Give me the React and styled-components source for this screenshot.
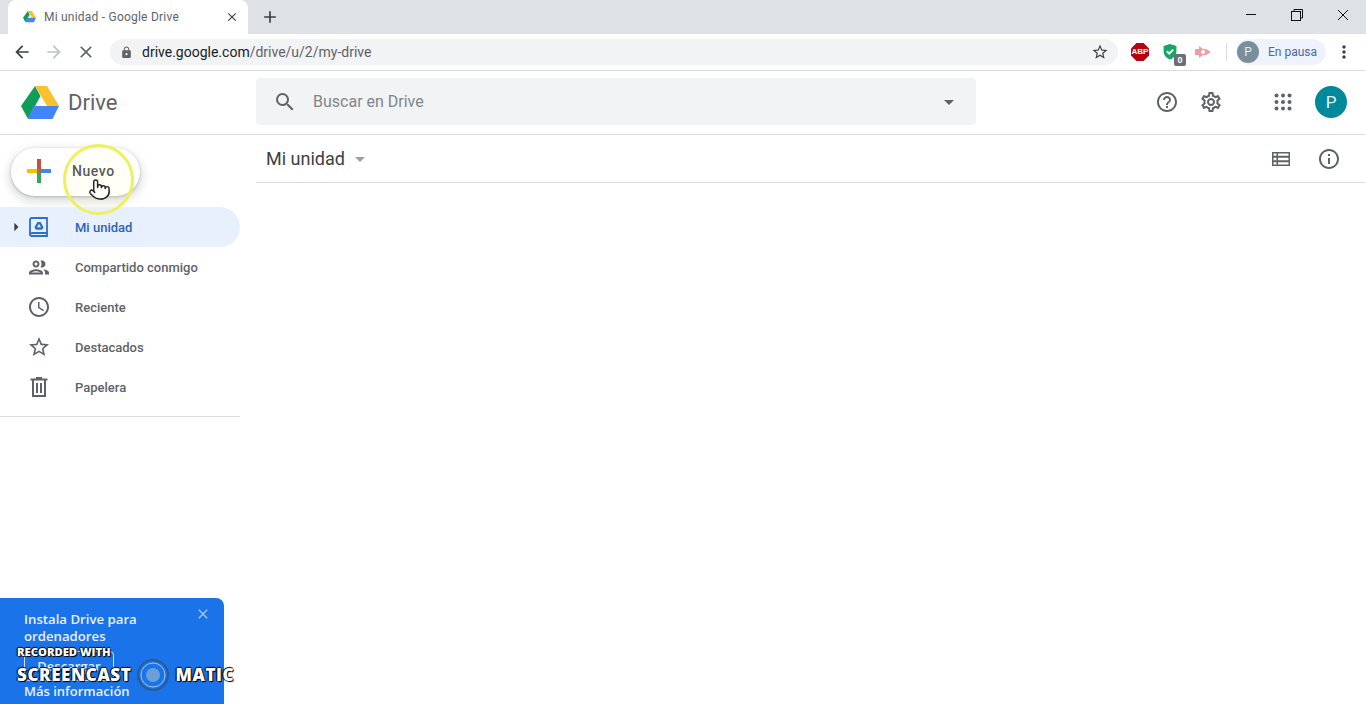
import styled, { createGlobalStyle } from 'styled-components'
import { Pointer } from 'lucide-react'
import {
  MdAccessTime,
  MdAdd,
  MdArrowBack,
  MdArrowDropDown,
  MdArrowForward,
  MdArrowRight,
  MdClose,
  MdHelpOutline,
  MdInfoOutline,
  MdLock,
  MdMoreVert,
  MdOutlinePeople,
  MdOutlineSettings,
  MdSearch,
  MdStarBorder,
} from 'react-icons/md'

const GlobalStyle = createGlobalStyle`
  html, body {
    margin: 0;
    height: 100%;
    overflow: hidden;
    background: #fff;
    font-family: Roboto, "Liberation Sans", sans-serif;
  }
`

const Page = styled.div`
  position: relative;
  width: 1366px;
  height: 704px;
  overflow: hidden;
  display: flex;
  flex-direction: column;
`

const TabStrip = styled.div`
  height: 34px;
  flex: none;
  display: flex;
  align-items: flex-end;
  padding-left: 8px;
  background: #dee1e6;
`

const Tab = styled.div`
  width: 240px;
  height: 34px;
  padding: 0 9px 0 15px;
  box-sizing: border-box;
  display: flex;
  align-items: center;
  gap: 8px;
  background: #fff;
  border-radius: 8px 8px 0 0;
  font-size: 12px;
  color: #5f6368;
`

const TabTitle = styled.span`
  flex: 1;
  letter-spacing: 0.22px;
`

const NewTab = styled.div`
  width: 44px;
  display: flex;
  justify-content: center;
  padding-bottom: 7px;
  color: #3c4043;
  font-size: 20px;
  line-height: 0;
`

const WindowControls = styled.div`
  margin-left: auto;
  align-self: flex-start;
  display: flex;
  height: 30px;
  align-items: center;
`

const WindowButton = styled.div`
  width: 46px;
  height: 30px;
  display: flex;
  align-items: center;
  justify-content: center;
`

const BrowserBar = styled.div`
  height: 36px;
  flex: none;
  display: flex;
  align-items: center;
  background: #fff;
  border-bottom: 1px solid #dadce0;
  box-sizing: content-box;
`

const NavIcon = styled.div`
  width: 32px;
  flex: none;
  display: flex;
  justify-content: center;
  font-size: 20px;
  line-height: 0;
  color: ${(p) => p.$color || '#5f6368'};
`

const MenuIcon = styled(NavIcon)`
  margin-left: 2px;
`

const BackGroup = styled.div`
  display: flex;
  flex: none;
  padding-left: 6px;
`

const UrlPill = styled.div`
  width: 1008px;
  flex: none;
  height: 26px;
  margin-left: 8px;
  padding: 0 9px 0 10px;
  box-sizing: border-box;
  display: flex;
  align-items: center;
  background: #f1f3f4;
  border-radius: 13px;
  color: #5f6368;
`

const Url = styled.span`
  flex: 1;
  margin-left: 9px;
  font-size: 14px;
  color: #5f6368;

  b {
    font-weight: 400;
    color: #202124;
  }
`

const Extensions = styled.div`
  display: flex;
  flex: none;
  align-items: center;
  width: 82px;
  margin-left: 13px;
`

const AbpBadge = styled.div`
  width: 18px;
  height: 18px;
  clip-path: polygon(30% 0, 70% 0, 100% 30%, 100% 70%, 70% 100%, 30% 100%, 0 70%, 0 30%);
  background: #b3040f;
  color: #fff;
  font: 700 8px/18px "Liberation Sans", sans-serif;
  text-align: center;
`

const Shield = styled.div`
  position: relative;
  margin-left: 12px;
  width: 18px;
  height: 16px;
  line-height: 0;
  text-align: center;
`

const ShieldCount = styled.span`
  position: absolute;
  left: 13px;
  top: 10px;
  width: 12px;
  height: 12px;
  border-radius: 2px;
  background: #6b6f75;
  color: #fff;
  font: 700 9px/12px "Liberation Sans", sans-serif;
  text-align: center;
`

const Arrow = styled.div`
  margin-left: 16px;
  line-height: 0;
`

const Separator = styled.div`
  width: 1px;
  flex: none;
  height: 18px;
  margin-left: 13px;
  background: #dadce0;
`

const ProfilePill = styled.div`
  width: 90px;
  flex: none;
  height: 26px;
  margin-left: 9px;
  padding-left: 1px;
  box-sizing: border-box;
  display: flex;
  align-items: center;
  gap: 9px;
  border-radius: 13px;
  background: #eef3fd;
  font-size: 12px;
  color: #4a68a8;
`

const ProfileAvatar = styled.div`
  width: 22px;
  height: 22px;
  border-radius: 50%;
  background: #78909c;
  color: #e8eef2;
  font-size: 12px;
  line-height: 22px;
  text-align: center;
`

const DriveHeader = styled.header`
  height: 64px;
  flex: none;
  padding-bottom: 2px;
  box-sizing: border-box;
  display: flex;
  align-items: center;
  border-bottom: 1px solid #dadce0;
`

const Brand = styled.div`
  width: 256px;
  padding: 2px 0 0 21px;
  box-sizing: border-box;
  display: flex;
  align-items: center;
  gap: 9px;
  font-size: 22px;
  color: #5f6368;
`

const SearchBox = styled.div`
  width: 720px;
  height: 47px;
  padding: 0 15px 0 17px;
  box-sizing: border-box;
  display: flex;
  align-items: center;
  background: #f1f3f4;
  border-radius: 4px;
  font-size: 16px;
  color: #80868b;
  line-height: 0;
`

const SearchText = styled.span`
  flex: 1;
  margin-left: 16px;
  line-height: 20px;
`

const HeaderTools = styled.div`
  flex: 1;
  display: flex;
  align-items: center;
  padding-left: 179px;
`

const ToolIcon = styled.div`
  line-height: 0;
  color: #5f6368;
  font-size: ${(p) => p.$size || 24}px;
  margin-left: ${(p) => p.$gap || 0}px;
`

const DriveAvatar = styled.div`
  width: 32px;
  height: 32px;
  margin-left: 20px;
  border-radius: 50%;
  background: #00899a;
  color: #e0f4f5;
  font-size: 17px;
  line-height: 32px;
  text-align: center;
`

const Body = styled.div`
  flex: 1;
  display: flex;
  min-height: 0;
`

const Sidebar = styled.aside`
  width: 256px;
  flex: none;
  padding-top: 13px;
  box-sizing: border-box;
`

const NewButton = styled.div`
  width: 129px;
  height: 48px;
  margin-left: 11px;
  padding: 0 0 2px 16px;
  box-sizing: border-box;
  display: flex;
  align-items: center;
  gap: 21px;
  background: #fff;
  border-radius: 24px;
  box-shadow: 0 1px 3px rgba(60, 64, 67, 0.3), 0 4px 8px 3px rgba(60, 64, 67, 0.15);
  font-size: 14px;
  font-weight: 500;
  letter-spacing: 0.55px;
  color: #4a4e52;
`

const NavList = styled.nav`
  width: 240px;
  margin-top: 11px;
  padding-bottom: 9px;
  border-bottom: 1px solid #dadce0;
`

const NavRow = styled.div`
  position: relative;
  height: 40px;
  display: flex;
  align-items: center;
  padding-left: 27px;
  box-sizing: border-box;
  gap: 24px;
  border-radius: 0 20px 20px 0;
  background: ${(p) => (p.$active ? '#e8f0fe' : 'transparent')};
  color: ${(p) => (p.$active ? '#2a63bb' : '#5f6368')};
  font-size: 13px;
  font-weight: 500;
`

const RowCaret = styled.span`
  position: absolute;
  left: 6px;
  top: 10px;
  font-size: 20px;
  line-height: 0;
  color: #3c4043;
`

const RowIcon = styled.span`
  width: 24px;
  display: flex;
  justify-content: center;
  font-size: ${(p) => p.$size || 24}px;
  line-height: 0;
  color: #5f6368;
`

const Main = styled.main`
  flex: 1;
`

const MainBar = styled.div`
  height: 48px;
  display: flex;
  align-items: center;
  padding: 0 25px 0 10px;
  border-bottom: 1px solid #dadce0;
  box-sizing: border-box;
`

const MainTitle = styled.div`
  flex: 1;
  display: flex;
  align-items: center;
  gap: 3px;
  font-size: 18px;
  color: #3c4043;
`

const Promo = styled.div`
  position: absolute;
  left: 0;
  bottom: 0;
  width: 224px;
  height: 106px;
  padding: 13px 24px 0;
  box-sizing: border-box;
  background: #1a73e8;
  border-radius: 0 8px 0 0;
  color: #e8f0fe;
  font-family: "Open Sans", Roboto, sans-serif;
  font-size: 13.2px;
  font-weight: 600;
  line-height: 17px;
`

const PromoClose = styled.span`
  position: absolute;
  top: 8px;
  right: 13px;
  font-size: 16px;
  line-height: 0;
  color: #a8c7fa;
`

const PromoButton = styled.div`
  width: 90px;
  height: 30px;
  margin-top: 6px;
  box-sizing: border-box;
  border: 1px solid #cfe0fb;
  border-radius: 4px;
  text-align: center;
  line-height: 28px;
  font-size: 13px;
`

const PromoLink = styled.div`
  margin-top: 2px;
  font-size: 13px;
`

const Watermark = styled.div`
  position: absolute;
  left: 17px;
  top: 645px;
  color: #fff;
  font-family: "Open Sans", sans-serif;
  font-weight: 800;
  text-shadow: 1px 1px 1px #000, -1px 0 1px #000, 0 -1px 1px #000;
`

const WatermarkTop = styled.div`
  font-size: 11.2px;
  line-height: 14px;
`

const WatermarkRow = styled.div`
  display: flex;
  align-items: center;
  gap: 5px;
  margin-top: -1px;
  font-size: 17px;
  line-height: 32px;
  letter-spacing: 0.6px;
`

const Highlight = styled.div`
  position: absolute;
  left: 63px;
  top: 144px;
  width: 71px;
  height: 71px;
  box-sizing: border-box;
  border: 3.5px solid #eef05c;
  border-radius: 50%;
  background: rgba(250, 250, 170, 0.08);
`

const Cursor = styled.div`
  position: absolute;
  left: 88px;
  top: 178px;
  line-height: 0;
  color: #222;
`

const DriveLogo = ({ size = 38 }) => (
  <svg width={size} height={(size * 34) / 38} viewBox="0 0 38 34">
    <polygon points="14,0 19.5,10 7,33 0,20" fill="#0f9d58" />
    <polygon points="14,0 26,0 38,20 26,20" fill="#fbc02d" />
    <polygon points="12.5,20 38,20 31.5,33 7,33" fill="#4285f4" />
  </svg>
)

const ColorPlus = () => (
  <svg width="24" height="24" viewBox="0 0 24 24">
    <rect x="0" y="10" width="10" height="4" fill="#fbbc05" />
    <rect x="14" y="10" width="10" height="4" fill="#4285f4" />
    <rect x="10" y="0" width="4" height="10" fill="#c5503f" />
    <rect x="10" y="14" width="4" height="10" fill="#34a853" />
    <rect x="10" y="10" width="4" height="4" fill="#8a7a5a" />
  </svg>
)

const MyDriveIcon = () => (
  <svg width="20" height="20" viewBox="0 0 20 20" fill="none">
    <path d="M3 1h15v15H3.500C2.200 16 1 17 1 18V3c0-1.100.9-2 2-2z" stroke="#2a6fd0" strokeWidth="1.800" />
    <path d="M1 17.500C1 18.500 2 19 3 19h15v-3" stroke="#2a6fd0" strokeWidth="1.800" />
    <path d="M8.400 5h3.200l3 5.200-1.500 2.600H6.900l-1.500-2.600z" fill="#2a6fd0" />
    <path d="M10 6.800l-1.900 3.400h3.800z" fill="#e8f0fe" />
  </svg>
)

const TrashIcon = () => (
  <svg width="18" height="20" viewBox="0 0 18 20" fill="#5f6368">
    <path d="M6 0h6v1.500h5.500v2H16V20H2V3.500H.5v-2H6zM4 3.500V18h10V3.500z" fillRule="evenodd" />
    <rect x="6" y="6" width="2" height="10" />
    <rect x="10" y="6" width="2" height="10" />
  </svg>
)

const AppsIcon = () => (
  <svg width="24" height="24" viewBox="0 0 24 24" fill="#5f6368">
    {[5.500, 12, 18.500].map((y) =>
      [5.500, 12, 18.500].map((x) => <circle key={`${x}-${y}`} cx={x} cy={y} r="2" />),
    )}
  </svg>
)

const RestoreIcon = () => (
  <svg width="12" height="12" viewBox="0 0 12 12" fill="none" stroke="#111" strokeWidth="1">
    <rect x="0.5" y="2.500" width="9" height="9" />
    <path d="M3 2.500V.5h8.500V9H9.500" />
  </svg>
)

const shieldPath = 'M9 0l8 2.500V9c0 5-3.500 8.500-8 10.500C4.500 17.500 1 14 1 9V2.500z'

const navItems = [
  { label: 'Compartido conmigo', icon: <MdOutlinePeople />, size: 27 },
  { label: 'Reciente', icon: <MdAccessTime /> },
  { label: 'Destacados', icon: <MdStarBorder /> },
  { label: 'Papelera', icon: <TrashIcon /> },
]

const App = () => (
  <Page>
    <GlobalStyle />
    <TabStrip>
      <Tab>
        <DriveLogo size={13} />
        <TabTitle>Mi unidad - Google Drive</TabTitle>
        <MdClose size={14} color="#3c4043" />
      </Tab>
      <NewTab>
        <MdAdd />
      </NewTab>
      <WindowControls>
        <WindowButton>
          <svg width="10" height="2" viewBox="0 0 10 2"><rect width="10" height="1" fill="#111" /></svg>
        </WindowButton>
        <WindowButton>
          <RestoreIcon />
        </WindowButton>
        <WindowButton>
          <svg width="12" height="12" viewBox="0 0 12 12" stroke="#111"><path d="M1 1l10 10M11 1L1 11" /></svg>
        </WindowButton>
      </WindowControls>
    </TabStrip>

    <BrowserBar>
      <BackGroup>
        <NavIcon $color="#3c4043"><MdArrowBack /></NavIcon>
        <NavIcon $color="#bdc1c6"><MdArrowForward /></NavIcon>
        <NavIcon $color="#5f6368"><MdClose /></NavIcon>
      </BackGroup>
      <UrlPill>
        <MdLock size={13} color="#5f6368" />
        <Url><b>drive.google.com</b>/drive/u/2/my-drive</Url>
        <MdStarBorder size={18} color="#3c4043" />
      </UrlPill>
      <Extensions>
        <AbpBadge>ABP</AbpBadge>
        <Shield>
          <svg width="18" height="16" viewBox="0 0 18 20">
            <path d={shieldPath} fill="#16a765" />
            <path d="M5 9l3 3 5-5" fill="none" stroke="#fff" strokeWidth="2.500" />
          </svg>
          <ShieldCount>0</ShieldCount>
        </Shield>
        <Arrow>
          <svg width="16" height="12" viewBox="0 0 16 12">
            <path d="M0 3h4V0l4 3h3l5 3-5 3H8l-4 3V9H0z" fill="#ee9ea3" />
            <circle cx="8" cy="6" r="2" fill="#fff" />
          </svg>
        </Arrow>
      </Extensions>
      <Separator />
      <ProfilePill>
        <ProfileAvatar>P</ProfileAvatar>
        En pausa
      </ProfilePill>
      <MenuIcon $color="#3c4043"><MdMoreVert /></MenuIcon>
    </BrowserBar>

    <DriveHeader>
      <Brand>
        <DriveLogo />
        Drive
      </Brand>
      <SearchBox>
        <MdSearch size={24} color="#5f6368" />
        <SearchText>Buscar en Drive</SearchText>
        <MdArrowDropDown size={24} color="#5f6368" />
      </SearchBox>
      <HeaderTools>
        <ToolIcon><MdHelpOutline /></ToolIcon>
        <ToolIcon $gap={20}><MdOutlineSettings /></ToolIcon>
        <ToolIcon $gap={48}><AppsIcon /></ToolIcon>
        <DriveAvatar>P</DriveAvatar>
      </HeaderTools>
    </DriveHeader>

    <Body>
      <Sidebar>
        <NewButton>
          <ColorPlus />
          Nuevo
        </NewButton>
        <NavList>
          <NavRow $active>
            <RowCaret><MdArrowRight /></RowCaret>
            <RowIcon><MyDriveIcon /></RowIcon>
            Mi unidad
          </NavRow>
          {navItems.map((item) => (
            <NavRow key={item.label}>
              <RowIcon $size={item.size}>{item.icon}</RowIcon>
              {item.label}
            </NavRow>
          ))}
        </NavList>
      </Sidebar>
      <Main>
        <MainBar>
          <MainTitle>
            Mi unidad
            <MdArrowDropDown size={24} color="#9aa0a6" />
          </MainTitle>
          <ToolIcon><svg width="18" height="14" viewBox="0 0 18 14" fill="#5f6368"><path d="M0 0h18v14H0zM1.500 1.500v2.300h3V1.500zm4.500 0v2.300h10.500V1.500zM1.500 5.800v2.400h3V5.800zm4.500 0v2.400h10.500V5.800zM1.500 10.200v2.300h3v-2.300zm4.500 0v2.300h10.500v-2.300z" fillRule="evenodd" /></svg></ToolIcon>
          <ToolIcon $gap={27}><MdInfoOutline /></ToolIcon>
        </MainBar>
      </Main>
    </Body>

    <Promo>
      <PromoClose><MdClose /></PromoClose>
      Instala Drive para
      <br />
      ordenadores
      <PromoButton>Descargar</PromoButton>
      <PromoLink>Más información</PromoLink>
    </Promo>

    <Watermark>
      <WatermarkTop>RECORDED WITH</WatermarkTop>
      <WatermarkRow>
        SCREENCAST
        <svg width="34" height="34" viewBox="0 0 34 34">
          <circle cx="17" cy="17" r="15" fill="none" stroke="#2c5a94" strokeWidth="2" />
          <circle cx="17" cy="17" r="12" fill="none" stroke="#a9c8f0" strokeWidth="1" />
          <circle cx="17" cy="17" r="7" fill="#6aa0d8" />
        </svg>
        MATIC
      </WatermarkRow>
    </Watermark>

    <Highlight />
    <Cursor>
      <Pointer size={23} fill="#fff" strokeWidth={1.5} />
    </Cursor>
  </Page>
)

export default App
